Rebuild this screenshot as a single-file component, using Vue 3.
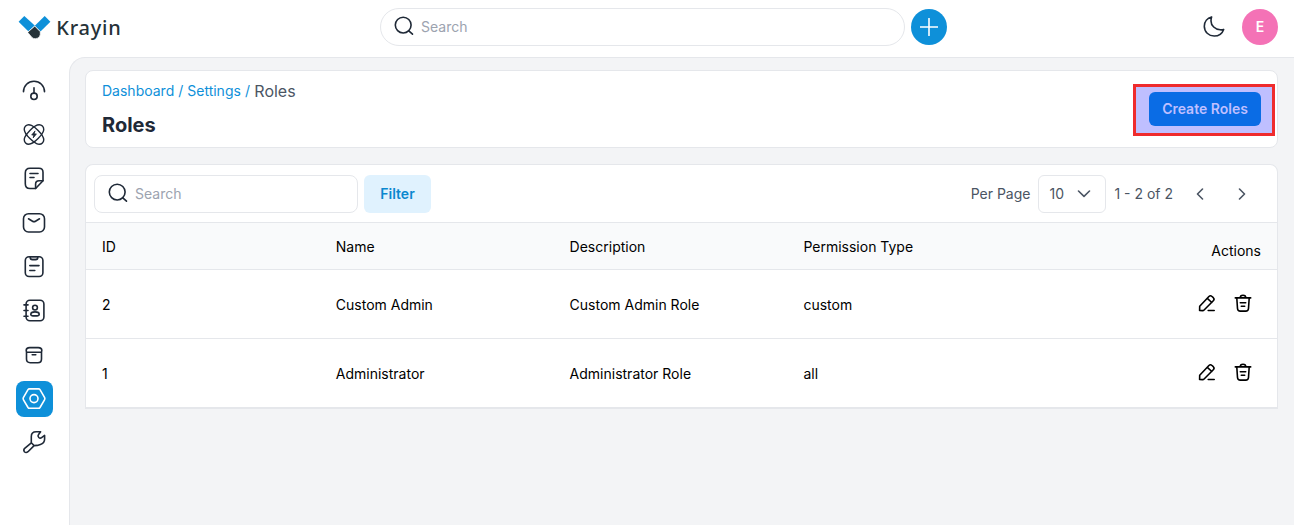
<script setup>
const navItems = [
  { name: 'dashboard' },
  { name: 'leads' },
  { name: 'quotes' },
  { name: 'mail' },
  { name: 'activities' },
  { name: 'contacts' },
  { name: 'products' },
  { name: 'settings', active: true },
  { name: 'configuration' },
]
const columns = ['ID', 'Name', 'Description', 'Permission Type']
const roles = [
  { id: 2, name: 'Custom Admin', description: 'Custom Admin Role', type: 'custom' },
  { id: 1, name: 'Administrator', description: 'Administrator Role', type: 'all' },
]
</script>

<template>
  <div class="app">
    <header class="topbar">
      <div class="brand">
        <svg class="logo" width="104" height="30" viewBox="0 0 104 30">
          <path d="M6.3 4 0.6 9.8 10.5 19.4 17 13.7Z" fill="#0e90d9" />
          <path d="M26.7 4 32.4 9.8 22.5 19.4 16.8 13.7Z" fill="#0e90d9" />
          <path d="M16.9 14.2 22.3 19.7Q23 26.2 17.3 26.7Q15 26.7 13.7 25.2L9.8 20.5Z" fill="#263238" stroke="#fff" stroke-width=".7" />
          <text x="38.2" y="22.9" textLength="64.6" lengthAdjust="spacing">Krayin</text>
        </svg>
      </div>
      <div class="top-center">
        <div class="search search-global">
          <svg width="20" height="20" viewBox="0 0 20 20"><circle cx="9.2" cy="9.1" r="7.9" /><path d="m14.8 14.8 3.7 3.4" /></svg>
          <span>Search</span>
        </div>
        <button class="add" aria-label="Add">
          <svg width="18" height="18" viewBox="0 0 18 18"><path d="M9 .5v17M.5 9h17" /></svg>
        </button>
      </div>
      <div class="top-right">
        <svg class="moon" width="24" height="24" viewBox="0 0 24 24"><path d="M9.6 1.9C5.4 3 2.3 6.7 2.3 11.3c0 5.5 4.4 9.7 9.9 9.7 4.4 0 8.1-2.7 9.5-6.6-1.3.4-2.3.5-3.5.4-5.1-.2-9.2-4.2-9.2-8.9 0-1.5.2-2.7.6-4Z" /></svg>
        <div class="avatar">E</div>
      </div>
    </header>

    <div class="body">
      <nav class="sidebar">
        <a v-for="item in navItems" :key="item.name" class="nav-item" :class="{ active: item.active }">
          <svg width="24" height="24" viewBox="0 0 24 24">
            <g v-if="item.name === 'dashboard'">
              <path d="M1.5 12.8C1.5 6.6 6.2 2.3 12 2.3s10.5 4.3 10.5 10.5M12 8.7v5.2" /><circle cx="12" cy="17.3" r="3.2" />
            </g>
            <g v-else-if="item.name === 'leads'" class="fine">
              <path d="M-11.9 0C-11.9-4.6-6-5.8 0-5.8S11.900-4.600 11.900 0 6 5.800 0 5.800-11.900 4.600-11.900 0Z" transform="translate(12 11.5) rotate(45)" />
              <path d="M-11.9 0C-11.9-4.6-6-5.8 0-5.8S11.900-4.600 11.900 0 6 5.800 0 5.800-11.900 4.600-11.900 0Z" transform="translate(12 11.5) rotate(-45)" />
              <path d="m12.8 8.2-3.1 3.8h2.1l-.6 2.9 3.2-4h-2.1Z" fill="currentColor" stroke-width=".8" />
            </g>
            <g v-else-if="item.name === 'quotes'">
              <path d="M8 1.3h9q4 0 4 4v8.4L13.6 21.5H8q-4.7 0-4.7-4.7V6Q3.3 1.3 8 1.3Z" /><path d="M21 13.7h-4q-3.4 0-3.4 3.4V21.5M8 6.5h8M8 10.5h4" />
            </g>
            <g v-else-if="item.name === 'mail'">
              <rect x="1.5" y="2.7" width="21" height="18.3" rx="5" /><path d="m6.5 7.8 4 2.4q1.5.9 3 0l4-2.4" />
            </g>
            <g v-else-if="item.name === 'activities'">
              <rect x="3.3" y="1.7" width="17.6" height="19.8" rx="3.8" /><path d="M8.2 1.8h7.6v.8q0 2.2-2.2 2.2h-3.2q-2.2 0-2.2-2.2Z" fill="#a9acb2" /><path d="M7.8 10.6H17M7.8 15.5h5" />
            </g>
            <g v-else-if="item.name === 'contacts'">
              <rect x="4.1" y="1.3" width="17.8" height="20.4" rx="3.8" /><circle cx="13" cy="8.6" r="2.4" /><path d="M8.8 15.4c0-1.8 2-2.5 4.2-2.5s4.2.7 4.2 2.5c0 1.5-1.5 1.5-4.2 1.5s-4.2 0-4.2-1.5ZM2 5.9h4M2 11.5h4M2 17.2h4" />
            </g>
            <g v-else-if="item.name === 'products'">
              <path d="M4.5 9.2h15v6.8q0 3.7-3.7 3.7H8.2q-3.7 0-3.7-3.7ZM4.5 9.2l-.3-1.9q0-2.7 3.5-2.7h8.6q3.5 0 3.5 2.7l-.3 1.9M10.2 11.8h3.6" />
            </g>
            <g v-else-if="item.name === 'settings'">
              <path d="M7.5 1.9h9q1 0 1.5.8l4.5 7.7q.7 1.2 0 2.4L18 20.5q-.5.8-1.5.8h-9q-1 0-1.5-.8l-4.5-7.7q-.7-1.2 0-2.4L6 2.7q.5-.8 1.5-.8Z" /><circle cx="12" cy="11.6" r="4" />
            </g>
            <g v-else transform="translate(0.3 -0.9)">
              <path d="m9 12.7 2.8 2.8-6.1 6.1q-2 1.6-3.6 0-1.3-1.8.3-3.4ZM9 12.7V6.4q0-4.7 4.9-4.7h4.4l-2.2 3q-1 1.3.4 2.7 1.3 1.2 2.8.1l3-2.2v3.6q0 4.3-4.2 5.5l-3.1.9-3.2.2" />
            </g>
          </svg>
        </a>
      </nav>

      <main class="content">
        <section class="card page-head">
          <div>
            <div class="crumbs"><a>Dashboard</a><i>/</i><a>Settings</a><i>/</i><span>Roles</span></div>
            <h1>Roles</h1>
          </div>
          <div class="highlight"><button class="create">Create Roles</button></div>
        </section>

        <section class="card table">
          <div class="toolbar">
            <div class="tools-left">
              <div class="search search-table">
                <svg width="20" height="20" viewBox="0 0 20 20"><circle cx="9.2" cy="9.1" r="7.9" /><path d="m14.8 14.8 3.7 3.4" /></svg>
                <span>Search</span>
              </div>
              <button class="filter">Filter</button>
            </div>
            <div class="pager">
              <span>Per Page</span>
              <div class="select">10
                <svg width="14" height="8" viewBox="0 0 14 8"><path d="m1.5 1 5.5 5.4L12.5 1" /></svg>
              </div>
              <span>1 - 2 of 2</span>
              <svg class="prev" width="8" height="12" viewBox="0 0 8 12"><path d="M6.5 1 1.5 6l5 5" /></svg>
              <svg width="8" height="12" viewBox="0 0 8 12"><path d="m1.5 1 5 5-5 5" /></svg>
            </div>
          </div>
          <div class="row head">
            <div v-for="column in columns" :key="column">{{ column }}</div>
            <div class="actions-title">Actions</div>
          </div>
          <div v-for="role in roles" :key="role.id" class="row">
            <div>{{ role.id }}</div>
            <div>{{ role.name }}</div>
            <div>{{ role.description }}</div>
            <div>{{ role.type }}</div>
            <div class="actions">
              <svg width="24" height="24" viewBox="0 0 24 24"><path d="m4.6 19.5.1-4.2L13.900 5.500q1.500-1.500 3.100 0l1.300 1.200q1.500 1.500 0 3L9.100 19q-.6.6-1.500.6ZM12.300 7.300l4.500 4.200M13.200 19.500h6" /></svg>
              <svg width="24" height="24" viewBox="0 0 24 24"><path d="M4.3 6.9h15.4M5.8 7l.7 10.500q.2 2.600 2.800 2.600h5.400q2.600 0 2.800-2.600L18.200 7M9.200 6.800q0-2.600 2.800-2.600t2.800 2.600M9.300 11.800h5.400M10.300 15.200h3.400" /></svg>
            </div>
          </div>
        </section>
      </main>
    </div>
  </div>
</template>

<style>
body { background: #fff; }
</style>

<style scoped>
* { box-sizing: border-box; }
.app { height: 525px; display: flex; flex-direction: column; overflow: hidden; font: 14px/20px Inter, sans-serif; color: #000; }
svg { display: block; flex: none; fill: none; stroke: currentColor; stroke-width: 1.6; stroke-linecap: round; stroke-linejoin: round; }
button { border: 0; font: inherit; padding: 0; }
.topbar { height: 57px; flex: none; display: grid; grid-template-columns: 380px 1fr auto; padding: 0 16px 3px 0; align-items: center; }
.brand { padding-left: 18px; }
.logo { stroke: none; }
.logo text { font: 500 20px "Noto Sans", sans-serif; fill: #263238; stroke: none; }
.top-center { display: flex; align-items: center; gap: 6px; }
.search { display: flex; align-items: center; border: 1px solid #e5e7eb; height: 38px; color: #1f2937; background: #fff; }
.search span { color: #9ca3af; }
.search-global { width: 525px; border-radius: 19px; padding-left: 13px; gap: 7px; }
.search svg { position: relative; top: -1px; }
.add { width: 36px; height: 36px; border-radius: 50%; background: #0e90d9; color: #fff; display: grid; place-items: center; }
.top-right { display: flex; align-items: center; gap: 16px; color: #1f2937; }
.avatar { width: 36px; height: 36px; border-radius: 50%; background: #f472b6; color: #fff; display: grid; place-items: center; font-size: 14px; font-weight: 600; }
.body { flex: 1; min-height: 0; display: flex; }
.sidebar { width: 69px; flex: none; display: flex; flex-direction: column; gap: 8px; padding: 16px 16px 0; }
.nav-item { width: 37px; height: 36px; flex: none; display: flex; align-items: center; padding-left: 6px; border-radius: 8px; color: #1f2937; }
.nav-item.active { background: #0e90d9; color: #fff; }
.fine { stroke-width: 1.4; }
.content { flex: 1; background: #f3f4f6; border: solid #e5e7eb; border-width: 1px 0 0 1px; border-top-left-radius: 16px; padding: 12px 16px 0 15px; }
.card { background: #fff; border: 1px solid #e5e7eb; border-radius: 8px; }
.page-head { height: 78px; margin-bottom: 16px; display: flex; justify-content: space-between; align-items: center; padding: 0 2px 0 16px; }
.crumbs { display: flex; gap: 4px; align-items: center; height: 24px; color: #0e90d9; }
.crumbs i { font-style: normal; }
.crumbs span { font-size: 16px; color: #4b5563; padding-left: .4px; }
h1 { margin: 8px 0 0; font-size: 20px; line-height: 28px; font-weight: 700; color: #1f2937; }
.highlight { height: 52px; margin-top: 2px; padding: 5px 11px 0 13px; border: 3px solid #ef2b2d; background: #bfbfff; }
.create { display: block; width: 112px; height: 34px; border-radius: 6px; background: #0a6ce5; color: #bfbfff; font-weight: 600; }
.table { border-bottom-width: 2px; border-radius: 8px 8px 0 0; }
.toolbar { height: 58px; display: flex; align-items: center; justify-content: space-between; padding: 0 31px 0 8px; border-bottom: 1px solid #e5e7eb; }
.tools-left { display: flex; gap: 6px; }
.search-table { width: 264px; border-radius: 8px; padding-left: 13px; gap: 7px; }
.filter { width: 67px; height: 38px; border-radius: 6px; background: #e0f2fe; color: #0a88cf; font-weight: 600; }
.pager { display: flex; align-items: center; gap: 8px; color: #4b5563; }
.select { width: 68px; height: 38px; border: 1px solid #e5e7eb; border-radius: 6px; display: flex; align-items: center; justify-content: space-between; padding: 0 14px 0 10px; }
.prev { margin: 0 26px 0 15px; }
.row { display: grid; grid-template-columns: repeat(5, 1fr); column-gap: 10px; align-items: center; padding: 1px 16px 0; height: 69px; border-bottom: 1px solid #e5e7eb; }
.row:last-child { height: 68px; border-bottom: 0; }
.head { height: 47px; padding-top: 2px; background: #f9fafb; }
.actions-title { text-align: right; padding-top: 8px; }
.actions { display: flex; justify-content: flex-end; gap: 12px; padding: 0 6px 3px 0; }
</style>
